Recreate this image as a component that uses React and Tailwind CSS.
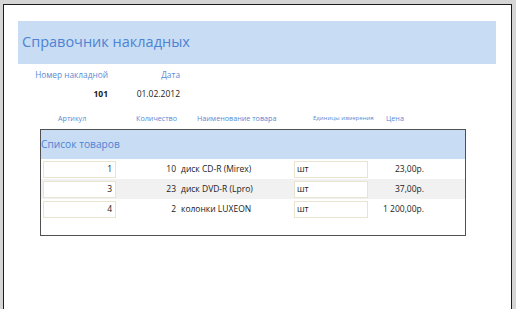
import React from "react";

const items = [
  { art: "1", qty: "10", name: "диск CD-R (Mirex)", unit: "шт", price: "23,00р." },
  { art: "3", qty: "23", name: "диск DVD-R (Lpro)", unit: "шт", price: "37,00р." },
  { art: "4", qty: "2", name: "колонки LUXEON", unit: "шт", price: "1 200,00р." },
];

function Row({ item, shaded }) {
  return (
    <div className={`flex h-[20px] items-center text-[8.5px] text-[#222] ${shaded ? "bg-[#f1f1f1]" : "bg-white"}`}>
      {/* артикул */}
      <div className="ml-[2px] flex h-[17px] w-[73px] items-center justify-end border border-[#e9e3cf] bg-white pr-[3px]">
        {item.art}
      </div>
      {/* количество */}
      <div className="w-[60px] text-right">{item.qty}</div>
      {/* наименование */}
      <div className="ml-[5px] w-[113px]">{item.name}</div>
      {/* ед. изм. */}
      <div className="flex h-[17px] w-[74px] items-center border border-[#e9e3cf] bg-white pl-[2px]">
        {item.unit}
      </div>
      {/* цена */}
      <div className="w-[56px] text-right">{item.price}</div>
    </div>
  );
}

export default function App() {
  return (
    <div
      className="flex h-[309px] w-[516px] bg-[#d5d5d5] pl-[3px] pr-[4px] pt-[4px]"
      style={{ fontFamily: '"Open Sans", "Liberation Sans", sans-serif' }}
    >
      <div className="flex flex-1 flex-col border-l border-r border-t border-[#1c1c1c] bg-white">
        {/* заголовок формы */}
        <div className="ml-[14px] mr-[15px] mt-[16px] flex h-[43px] items-center bg-[#c8dcf4] pl-[4px]">
          <span className="text-[14.5px] leading-none text-[#4d83d3]">Справочник накладных</span>
        </div>

        {/* номер и дата */}
        <div className="mt-[5px] flex text-[8.3px] leading-[12px] text-[#5b89d4]">
          <div className="w-[104px] text-right">Номер накладной</div>
          <div className="w-[72px] text-right">Дата</div>
        </div>
        <div className="mt-[7px] flex text-[8.5px] leading-[12px] text-[#222]">
          <div className="w-[104px] text-right font-bold">101</div>
          <div className="w-[72px] text-right">01.02.2012</div>
        </div>

        {/* подписи столбцов */}
        <div className="mt-[12px] flex h-[12px] items-center text-[7.2px] text-[#5b89d4]">
          <div className="ml-[54px] w-[78px]">Артикул</div>
          <div className="w-[61px]">Количество</div>
          <div className="w-[116px]">Наименование товара</div>
          <div className="w-[73px] text-[6px]">Единицы измерения</div>
          <div>Цена</div>
        </div>

        {/* подчинённая форма */}
        <div className="ml-[36px] mt-[5px] flex h-[107px] w-[426px] flex-col border border-[#505050]">
          <div className="flex h-[29px] items-center bg-[#c8dcf4]">
            <span className="text-[10.2px] leading-none text-[#4d83d3]">Список товаров</span>
          </div>
          {items.map((it, i) => (
            <Row key={it.art} item={it} shaded={i === 1} />
          ))}
        </div>
      </div>
    </div>
  );
}
